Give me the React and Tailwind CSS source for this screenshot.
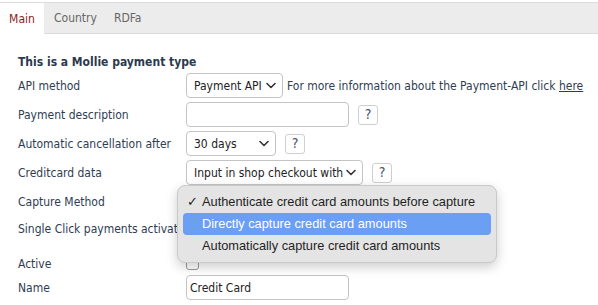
import React from 'react'

const font = { fontFamily: 'Tahoma, "DejaVu Sans Condensed", "DejaVu Sans", sans-serif' }

function Chevron() {
  return (
    <svg width="10" height="7" viewBox="0 0 10 7" className="shrink-0">
      <path d="M1 1.5 L5 5.5 L9 1.5" fill="none" stroke="#333" strokeWidth="1.6" strokeLinecap="round" strokeLinejoin="round" />
    </svg>
  )
}

function Select({ w, children }) {
  return (
    <div className={`${w} h-[25px] border border-[#c4c4c4] rounded-[4px] bg-white flex items-center justify-between pl-[7px] pr-[6px] text-[12px] text-[#222] whitespace-nowrap overflow-hidden`}>
      <span className="overflow-hidden">{children}</span>
      <Chevron />
    </div>
  )
}

function Help() {
  return (
    <div className="w-[20px] h-[20px] border border-[#cfcfcf] rounded-[3px] bg-white flex items-center justify-center text-[14px] text-[#44546a]">?</div>
  )
}

function Row({ label, h = 'h-[29px]', children }) {
  return (
    <div className={`flex items-center ${h}`}>
      <div className="w-[168px] shrink-0 whitespace-nowrap">{label}</div>
      <div className="flex items-center gap-[9px]">{children}</div>
    </div>
  )
}

export default function App() {
  return (
    <div className="w-[598px] h-[305px] bg-white overflow-hidden relative text-[12px] text-[#2f3d52]" style={font}>
      <div className="mt-[2px] h-[32px] bg-[#ececec] border-y border-[#dcdcdc] flex">
        <div className="w-[44px] bg-white -mb-px flex items-center justify-center text-[#8b1c1c]">Main</div>
        <div className="px-[10px] flex items-center text-[#666]">Country</div>
        <div className="px-[7px] flex items-center text-[#666]">RDFa</div>
      </div>

      <div className="pl-[18px] pt-[20px]">
        <div className="font-bold text-[#2b3a4e] h-[17px] leading-[17px]">This is a Mollie payment type</div>
        <Row label="API method">
          <Select w="w-[97px]">Payment API</Select>
          <span className="-ml-[5px] whitespace-nowrap">For more information about the Payment-API click <span className="underline">here</span></span>
        </Row>
        <Row label="Payment description">
          <div className="w-[163px] h-[25px] border border-[#c4c4c4] rounded-[4px] bg-white" />
          <Help />
        </Row>
        <Row label="Automatic cancellation after">
          <Select w="w-[90px]">30 days</Select>
          <Help />
        </Row>
        <Row label="Creditcard data">
          <Select w="w-[177px]">Input in shop checkout with</Select>
          <Help />
        </Row>
        <Row label="Capture Method">
          <div className="h-[25px]" />
        </Row>
        <Row label="Single Click payments activate" h="h-[26px]">
          <div className="h-[25px]" />
        </Row>
        <div className="h-[12px]" />
        <Row label="Active" h="h-[20px]">
          <div className="w-[13px] h-[13px] border border-[#999] rounded-[3px] bg-white -mt-[2px]" />
        </Row>
        <Row label="Name" h="h-[27px]">
          <div className="w-[163px] h-[25px] border border-[#c4c4c4] rounded-[4px] bg-white flex items-center px-[3px] text-[#222]">Credit Card</div>
        </Row>
        <Row label="" h="h-[25px]">
          <div className="w-[102px] h-[25px] border border-[#c4c4c4] rounded-[4px] bg-white mt-[8px]" />
          <div className="w-[46px] h-[25px] border border-[#c4c4c4] rounded-[4px] bg-white mt-[8px]" />
        </Row>
      </div>

      <div className="absolute left-[177px] top-[185px] w-[320px] h-[78px] bg-[#e4e4e4] border border-[#c9c9c9] rounded-[8px] shadow-[0_4px_12px_rgba(0,0,0,0.2)] px-[5px] pt-[4px] text-[12.8px] text-[#1f1f1f] whitespace-nowrap" style={{ fontFamily: '"Liberation Sans", Arial, sans-serif' }}>
        <div className="h-[23px] flex items-center pl-[4px]"><span className="w-[15px]">✓</span>Authenticate credit card amounts before capture</div>
        <div className="h-[22px] flex items-center pl-[19px] bg-[#6a9ff4] text-white rounded-[4px]">Directly capture credit card amounts</div>
        <div className="h-[22px] flex items-center pl-[19px]">Automatically capture credit card amounts</div>
      </div>
    </div>
  )
}
